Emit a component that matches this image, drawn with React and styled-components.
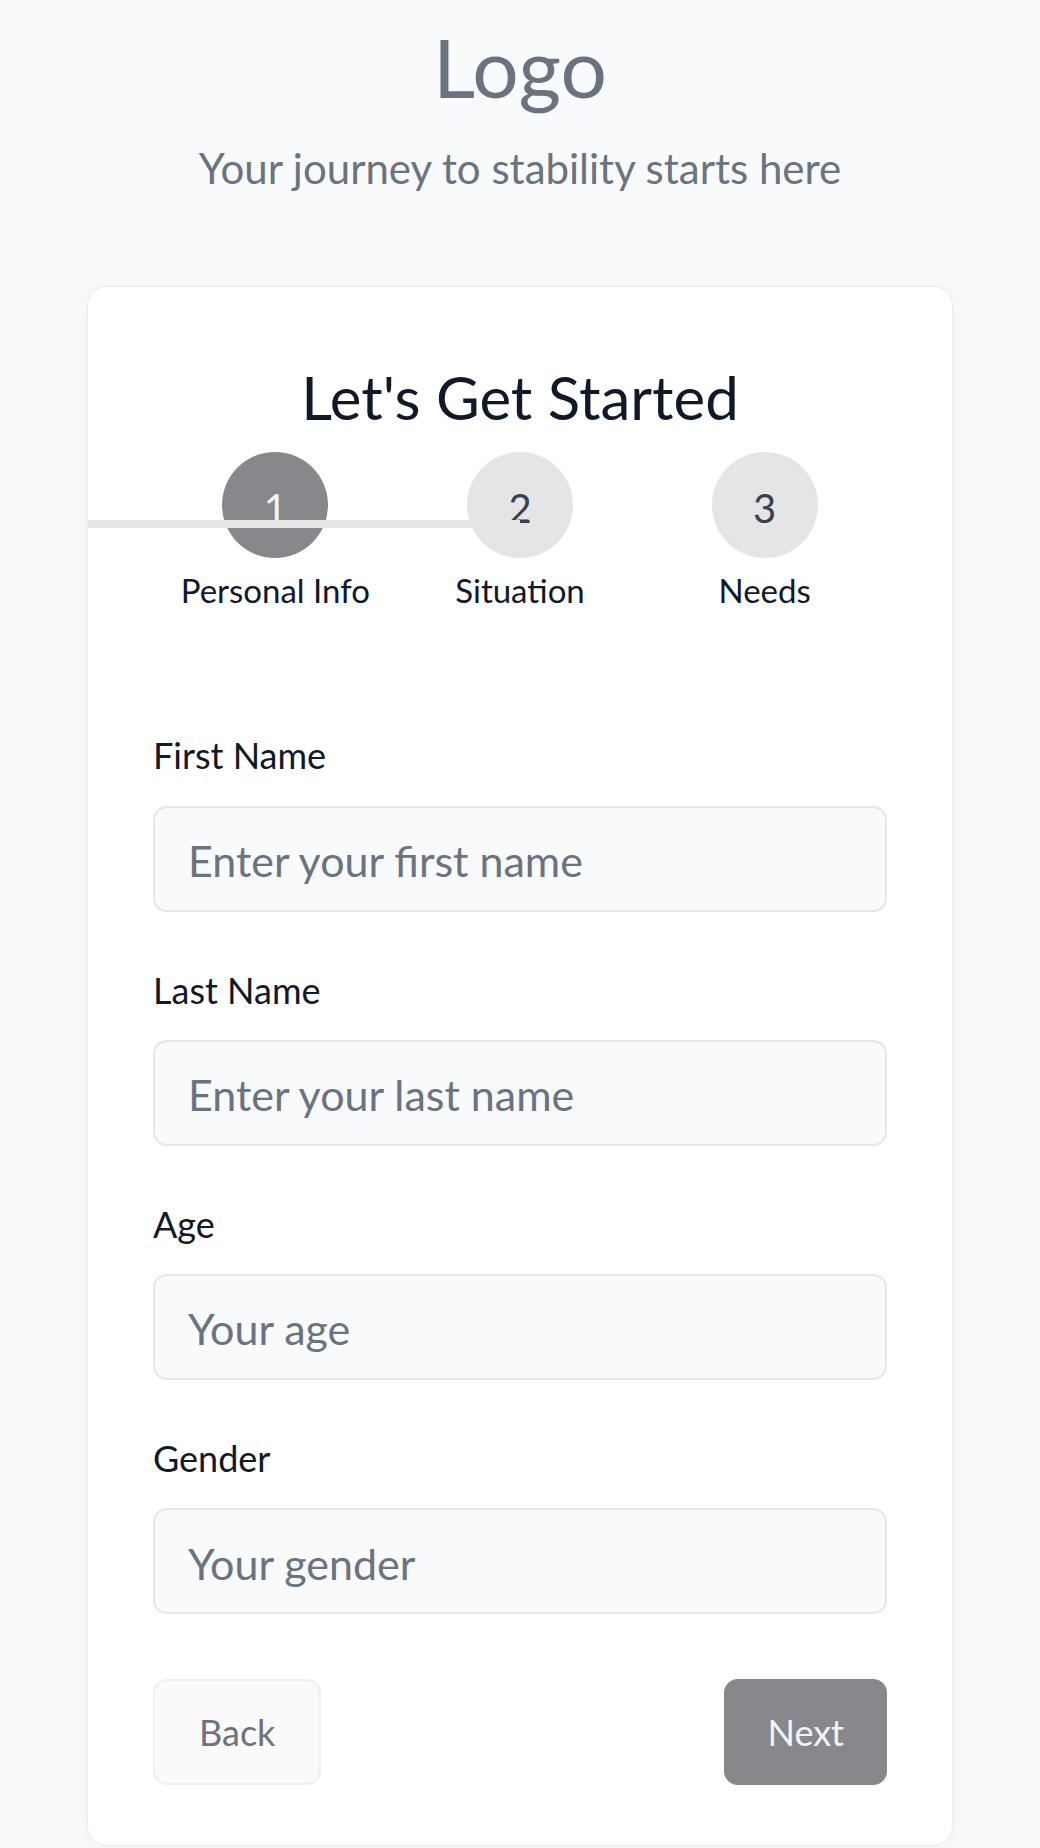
import styled, { createGlobalStyle } from "styled-components"

const steps = [
  { num: 1, label: "Personal Info" },
  { num: 2, label: "Situation" },
  { num: 3, label: "Needs" },
]

const fields = [
  { label: "First Name", placeholder: "Enter your first name" },
  { label: "Last Name", placeholder: "Enter your last name" },
  { label: "Age", placeholder: "Your age" },
  { label: "Gender", placeholder: "Your gender" },
]

function App() {
  const current = 1

  return (
    <>
      <GlobalStyle />
      <Page>
        <Header>
          <Logo>Logo</Logo>
          <Tagline>Your journey to stability starts here</Tagline>
        </Header>

        <Card>
          <Title>Let's Get Started</Title>

          <Steps>
            <ProgressLine />
            {steps.map((s) => (
              <Step key={s.num}>
                <Circle $active={s.num === current}>{s.num}</Circle>
                <StepLabel>{s.label}</StepLabel>
              </Step>
            ))}
          </Steps>

          <Form>
            {fields.map((f) => (
              <Field key={f.label}>
                <Label>{f.label}</Label>
                <Input type='text' placeholder={f.placeholder} />
              </Field>
            ))}
          </Form>

          <Actions>
            <Button type='button'>Back</Button>
            <Button type='button' $primary>
              Next
            </Button>
          </Actions>
        </Card>
      </Page>
    </>
  )
}

export default App

const GlobalStyle = createGlobalStyle`
  * {
    box-sizing: border-box;
  }

  body {
    margin: 0;
    background: #f9fafb;
    font-family: Lato, "Noto Sans", sans-serif;
  }
`

const Page = styled.div`
  min-height: 100vh;
  padding: 17px 0 60px;
  background: #f9fafb;
`

const Header = styled.header`
  text-align: center;
  color: #6b7280;
`

const Logo = styled.h1`
  margin: 0;
  font-size: 82px;
  font-weight: 400;
  line-height: 1.2;
`

const Tagline = styled.p`
  margin: 28px 0 0;
  font-size: 42px;
  line-height: 1.2;
`

const Card = styled.main`
  width: 866px;
  margin: 92px auto 0;
  padding: 74px 65px 60px;
  background: #fff;
  border: 1px solid #ececec;
  border-radius: 20px;
  box-shadow: 0 2px 24px rgba(0, 0, 0, 0.04);
`

const Title = styled.h2`
  margin: 0;
  text-align: center;
  font-size: 60px;
  font-weight: 400;
  line-height: 1.2;
  color: #111827;
`

const Steps = styled.div`
  position: relative;
  margin-top: 19px;
  display: grid;
  grid-template-columns: repeat(3, 1fr);
`

const ProgressLine = styled.div`
  position: absolute;
  z-index: 1;
  top: 68px;
  left: -65px;
  width: calc(50% + 65px);
  height: 8px;
  background: #e5e5e5;
`

const Step = styled.div`
  display: flex;
  flex-direction: column;
  align-items: center;
`

const Circle = styled.div`
  width: 106px;
  height: 106px;
  padding-top: 6px;
  border-radius: 50%;
  display: flex;
  align-items: center;
  justify-content: center;
  font-size: 40px;
  background: ${(p) => (p.$active ? "#87888c" : "#e5e5e5")};
  color: ${(p) => (p.$active ? "#f3f4f6" : "#374151")};
`

const StepLabel = styled.span`
  margin-top: 13px;
  font-size: 33px;
  line-height: 1.2;
  color: #111827;
`

const Form = styled.form`
  margin-top: 124px;
  display: flex;
  flex-direction: column;
  gap: 57px;
`

const Field = styled.div`
  display: flex;
  flex-direction: column;
`

const Label = styled.label`
  margin-bottom: 28px;
  font-size: 36px;
  line-height: 1.2;
  color: #111827;
`

const Input = styled.input`
  width: 100%;
  height: 106px;
  padding: 34px 33px 30px;
  border: 2px solid #e5e7eb;
  border-radius: 14px;
  background: #f9fafb;
  font-family: inherit;
  font-size: 43px;
  color: #111827;
  outline: none;

  &::placeholder {
    color: #6b7280;
  }
`

const Actions = styled.div`
  margin-top: 65px;
  display: flex;
  justify-content: space-between;
`

const Button = styled.button`
  height: 106px;
  padding: 0 ${(p) => (p.$primary ? "41px" : "44px")};
  border-radius: 14px;
  border: 2px solid ${(p) => (p.$primary ? "#87888c" : "#f0f0f0")};
  background: ${(p) => (p.$primary ? "#87888c" : "#fafafa")};
  color: ${(p) => (p.$primary ? "#f3f4f6" : "#6b7280")};
  font-family: inherit;
  font-size: 36px;
  cursor: pointer;
`
